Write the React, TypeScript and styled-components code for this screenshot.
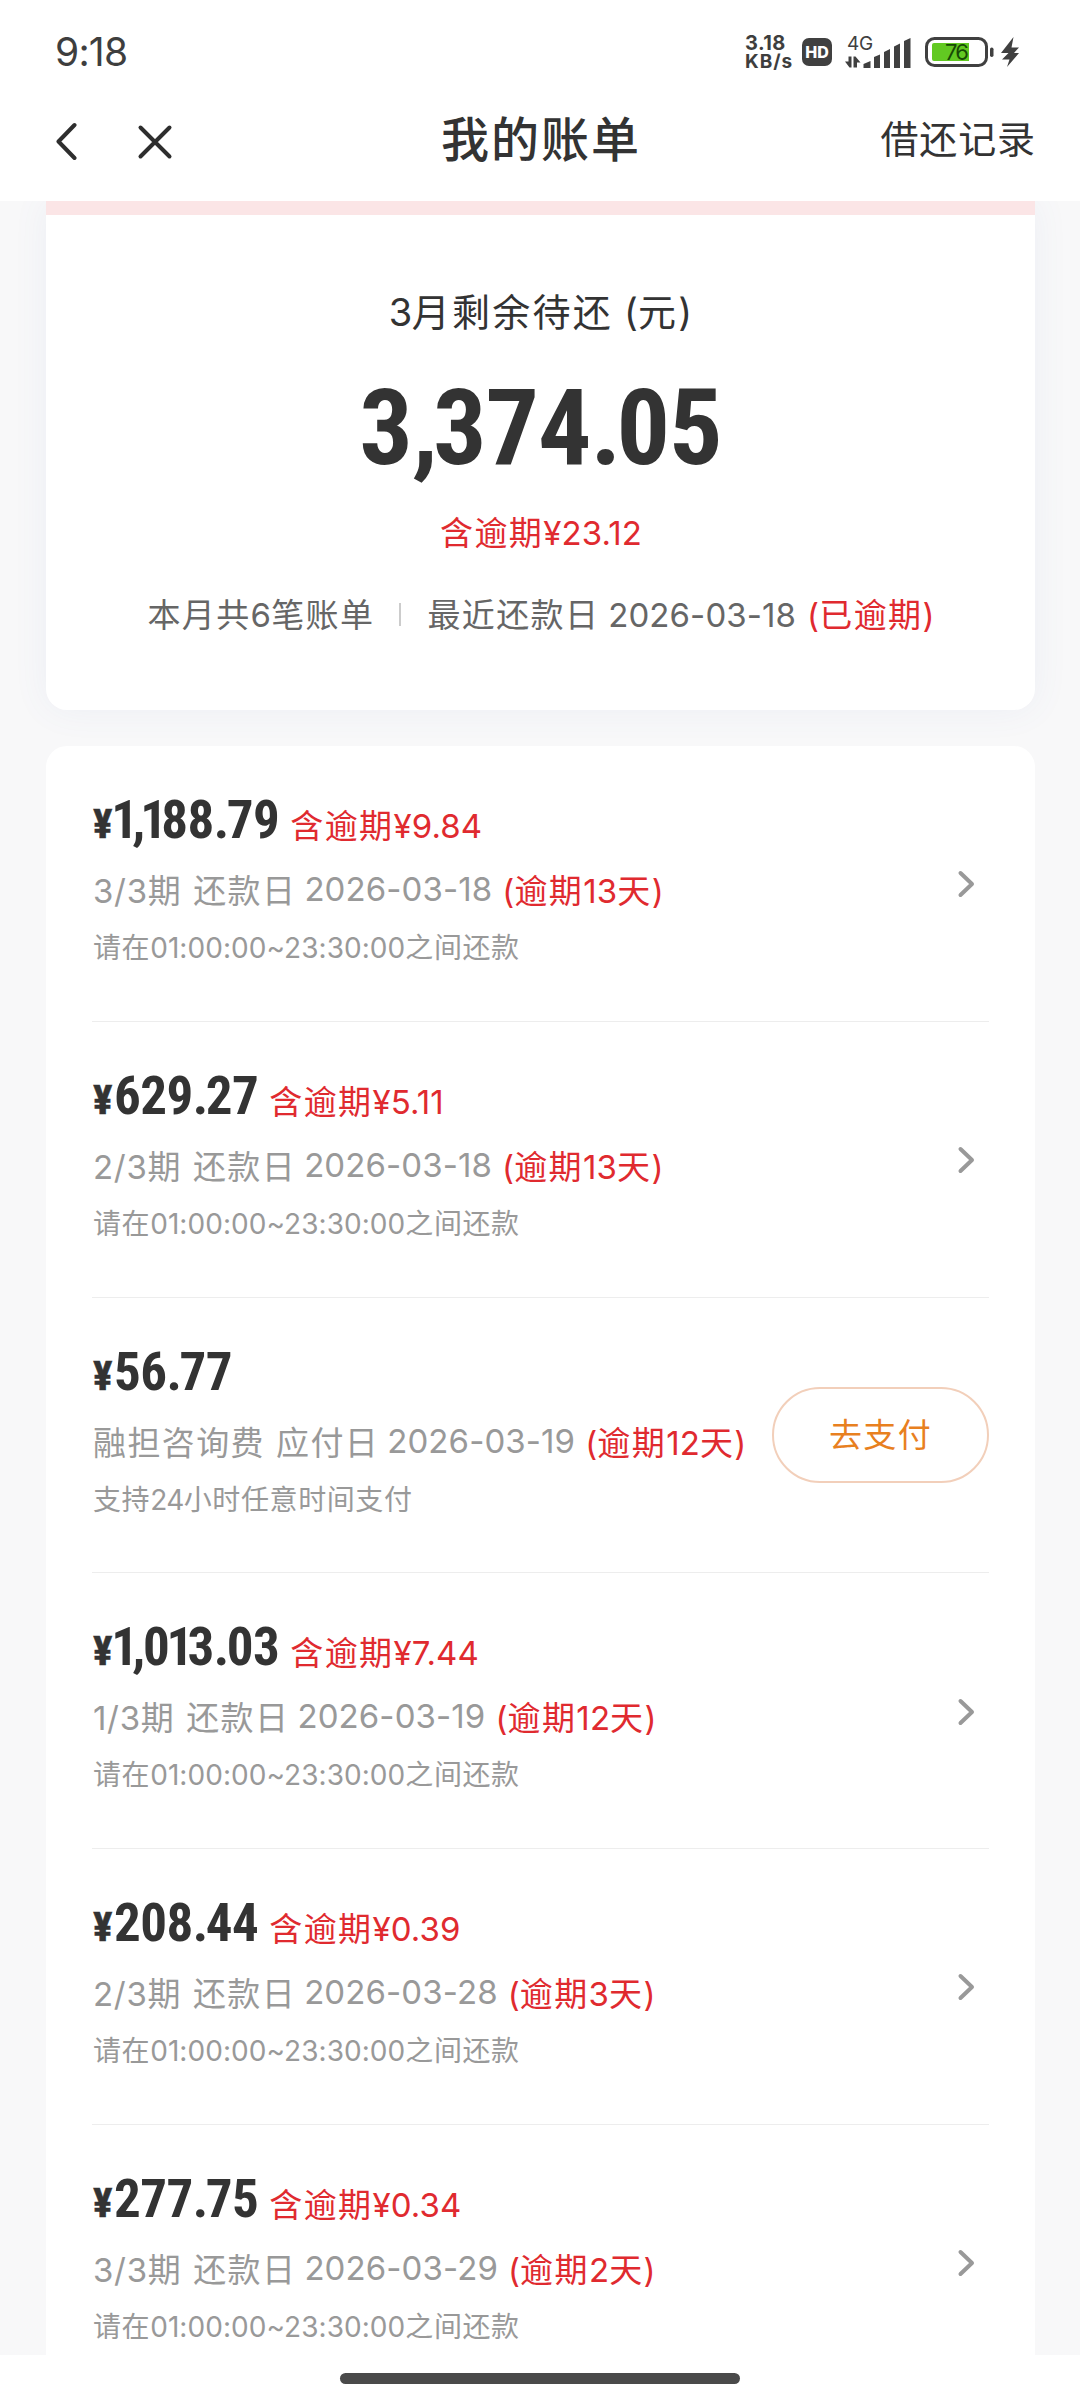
import React from "react";
import styled, { createGlobalStyle } from "styled-components";

const GlobalStyle = createGlobalStyle`
  * { box-sizing: border-box; }
  body { margin: 0; background: #ffffff; }
`;

const latin = `Inter, "Noto Sans CJK SC", sans-serif`;
const cjk = `"Noto Sans CJK SC", sans-serif`;
const figures = `"Roboto Condensed", Roboto, sans-serif`;

const Screen = styled.div`
  width: 1080px;
  height: 2400px;
  display: flex;
  flex-direction: column;
  overflow: hidden;
  background: #ffffff;
  color: #333333;
  font-family: ${cjk};
  white-space: nowrap;
`;

const StatusBar = styled.header`
  height: 104px;
  flex: none;
  display: flex;
  align-items: center;
  justify-content: space-between;
  padding: 0 60px 0 55px;
`;

const Clock = styled.span`
  font-family: ${latin};
  font-size: 39px;
  line-height: 44px;
  letter-spacing: -0.8px;
  color: #3e3e3e;
`;

const StatusIcons = styled.div`
  display: flex;
  align-items: center;
`;

const Speed = styled.div`
  width: 57px;
  display: flex;
  flex-direction: column;
  font-family: ${latin};
  font-weight: 700;
  color: #3e3e3e;
`;

const SpeedValue = styled.span`
  font-size: 20px;
  line-height: 19px;
  letter-spacing: 0.4px;
`;

const SpeedUnit = styled.span`
  font-size: 19px;
  line-height: 18px;
  letter-spacing: 1px;
`;

const HdBadge = styled.div`
  width: 30px;
  height: 28px;
  margin-right: 12px;
  border-radius: 7px;
  background: #404040;
  color: #ffffff;
  font-family: ${latin};
  font-weight: 800;
  font-size: 16px;
  line-height: 28px;
  text-align: center;
`;

const BatterySlot = styled.div`
  display: flex;
  margin: 0 4px 0 8px;
`;

const NavBar = styled.nav`
  height: 97px;
  flex: none;
  display: grid;
  grid-template-columns: 1fr auto 1fr;
  grid-template-rows: 76px;
  align-items: center;
  padding: 0 44px 21px 56px;
`;

const NavActions = styled.div`
  display: flex;
  align-items: center;
  gap: 57px;
`;

const Title = styled.h1`
  margin: 0 10px 12px 0;
  font-size: 48px;
  font-weight: 500;
  line-height: 60px;
  letter-spacing: 2px;
  color: #333333;
`;

const RecordsLink = styled.a`
  justify-self: end;
  margin-bottom: 10px;
  font-size: 38px;
  line-height: 56px;
  letter-spacing: 0.9px;
  color: #333333;
`;

const Content = styled.main`
  height: 2154px;
  flex: none;
  overflow: hidden;
  background: #f8f8f9;
  padding: 0 45px 0 46px;
`;

const Summary = styled.section`
  height: 509px;
  margin-bottom: 36px;
  border-top: 14px solid #fbe5e6;
  border-radius: 0 0 21px 21px;
  background: #ffffff;
  box-shadow: 0 0 36px rgba(80, 120, 190, 0.07);
  display: flex;
  flex-direction: column;
  align-items: center;
`;

const SummaryLabel = styled.div`
  margin-top: 65px;
  font-size: 38px;
  line-height: 60px;
  letter-spacing: 2.3px;
`;

const Total = styled.div`
  margin-top: 28px;
  font-family: ${figures};
  font-weight: 700;
  font-size: 106px;
  line-height: 116px;
  letter-spacing: -0.01em;
`;

const TotalOverdue = styled.div`
  margin: 20px 0 0 1px;
  font-size: 33px;
  line-height: 50px;
  letter-spacing: 1.4px;
  color: #e02a2f;
`;

const SummaryMeta = styled.div`
  margin: 30px 0 0 1px;
  display: flex;
  align-items: center;
  font-size: 33px;
  line-height: 50px;
  letter-spacing: 1.4px;
  color: #666666;
`;

const MetaDivider = styled.i`
  width: 2px;
  height: 23px;
  margin: 0 26px 0 25px;
  background: #cccccc;
`;

const Latin = styled.span<{ $track?: number }>`
  font-family: ${latin};
  letter-spacing: ${(p) => p.$track ?? 0.1}px;
`;

const Overdue = styled.span`
  margin-left: 11px;
  color: #e02a2f;
`;

const BillList = styled.ul`
  margin: 0;
  padding: 0 46px;
  list-style: none;
  border-radius: 21px;
  background: #ffffff;
`;

const BillRow = styled.li`
  height: 275.75px;
  display: flex;
  align-items: center;
  justify-content: space-between;
  border-bottom: 1px solid #ededed;
`;

const BillInfo = styled.div`
  height: 100%;
  padding: 41px 0 0 1px;
  display: flex;
  flex-direction: column;
  align-items: flex-start;
`;

const AmountLine = styled.div`
  height: 66px;
  display: flex;
  align-items: baseline;
`;

const Currency = styled.span`
  width: 21px;
  font-family: ${figures};
  font-weight: 700;
  font-size: 41px;
  line-height: 66px;
  -webkit-text-stroke: 0.6px currentColor;
`;

const Amount = styled.span`
  font-family: ${figures};
  font-weight: 700;
  font-size: 53px;
  line-height: 66px;
  letter-spacing: -0.01em;
`;

const NarrowOne = styled.span`
  margin: 0 -0.1em 0 -0.05em;
`;

const Separator = styled.span`
  letter-spacing: -0.045em;
`;

const Detail = styled.div`
  margin-top: 11px;
  display: flex;
  gap: 8px;
  font-size: 33px;
  line-height: 50px;
  letter-spacing: 1.4px;
  color: #999999;
`;

const DetailSubject = styled.span`
  margin-right: 3px;
`;

const AmountOverdue = styled.span`
  margin-left: 11px;
  font-size: 33px;
  line-height: 50px;
  letter-spacing: 1.4px;
  color: #e02a2f;
`;

const DetailOverdue = styled.span`
  margin-left: 2px;
  color: #e02a2f;
`;

const Hint = styled.div`
  margin-top: 9px;
  font-size: 28px;
  line-height: 42px;
  letter-spacing: 0.6px;
  color: #999999;
`;

const ChevronSlot = styled.div`
  display: flex;
  padding: 2px 14px 0 0;
`;

const PayButton = styled.button`
  width: 217px;
  height: 96px;
  margin-top: 1px;
  padding: 0 0 4px;
  border: 2px solid #f2cfba;
  border-radius: 48px;
  background: #ffffff;
  font-family: ${cjk};
  font-size: 33px;
  line-height: 50px;
  letter-spacing: 1.4px;
  color: #e8801f;
`;

const GestureBar = styled.footer`
  flex: 1;
  display: flex;
  justify-content: center;
  padding-top: 18px;
`;

const GesturePill = styled.div`
  width: 400px;
  height: 11px;
  border-radius: 6px;
  background: #4a4a4a;
`;

const SignalIcon = () => (
  <svg width="72" height="44" viewBox="844 30 72 44" fill="#404040">
    <text x="847" y="50" fontFamily="Inter, sans-serif" fontSize="19" letterSpacing="-0.2">4G</text>
    <path d="M845 61.500h3.500v-5h3v11h-2zM853.500 56.500h2l5 6h-3.500v5h-3.500z" />
    <path d="M863.500 68v-4l7-3v7zM874 68v-11l6-2.500v13.500zM884 68v-16l6-3v19zM894 68v-21.500l6-3v24.500zM904 68v-27l6.500-3v30z" />
  </svg>
);

const BatteryIcon = () => (
  <svg width="72" height="32" viewBox="924 36 72 32">
    <rect x="926.500" y="38.500" width="60" height="27" rx="8" fill="#fff" stroke="#404040" strokeWidth="3" />
    <path d="M934 43h35v18h-35a2 2 0 0 1-2-2v-14a2 2 0 0 1 2-2z" fill="#62c922" />
    <rect x="990" y="47.500" width="3.500" height="9.500" rx="1.700" fill="#404040" />
    <text x="956" y="60" textAnchor="middle" fontFamily="Inter, sans-serif" fontSize="22" letterSpacing="-1.800" fill="#174a05">76</text>
  </svg>
);

const BoltIcon = () => (
  <svg width="20" height="32" viewBox="1000 36 20 32" fill="#404040">
    <path d="M1013.500 37l-12.500 16h7.500l-6.500 6.500h7.500l-2.500 7.500 12-14h-5l5-5.500h-7.500z" />
  </svg>
);

const BackIcon = () => (
  <svg width="24" height="42" viewBox="55 121 24 42" fill="none" stroke="#2e2e2e" strokeWidth="4" strokeLinecap="round" strokeLinejoin="round">
    <path d="M73.500 125L57.500 141.500L73.500 158" />
  </svg>
);

const CloseIcon = () => (
  <svg width="36" height="36" viewBox="132 123 36 36" fill="none" stroke="#2e2e2e" strokeWidth="4" strokeLinecap="round">
    <path d="M135.500 126.500L164.500 155.500M164.500 126.500L135.500 155.500" />
  </svg>
);

const ChevronIcon = () => (
  <svg width="18" height="30" viewBox="0 0 18 30" fill="none" stroke="#999" strokeWidth="4" strokeLinecap="round" strokeLinejoin="round">
    <path d="M3.500 4L15 15L3.500 26" />
  </svg>
);

const Figures = ({ value }: { value: string }) => (
  <>
    {value.split(/([1.,])/).map((part, i) => {
      if (part === "1") return <NarrowOne key={i}>1</NarrowOne>;
      if (part === "." || part === ",") return <Separator key={i}>{part}</Separator>;
      return part;
    })}
  </>
);

type Bill = {
  amount: string;
  overdue?: string;
  term?: string;
  label: string;
  date: string;
  days: string;
  payable?: boolean;
};

const bills: Bill[] = [
  { amount: "1,188.79", overdue: "9.84", term: "3/3", label: "还款日", date: "2026-03-18", days: "13" },
  { amount: "629.27", overdue: "5.11", term: "2/3", label: "还款日", date: "2026-03-18", days: "13" },
  { amount: "56.77", label: "应付日", date: "2026-03-19", days: "12", payable: true },
  { amount: "1,013.03", overdue: "7.44", term: "1/3", label: "还款日", date: "2026-03-19", days: "12" },
  { amount: "208.44", overdue: "0.39", term: "2/3", label: "还款日", date: "2026-03-28", days: "3" },
  { amount: "277.75", overdue: "0.34", term: "3/3", label: "还款日", date: "2026-03-29", days: "2" },
];

const BillItem = ({ bill }: { bill: Bill }) => (
  <BillRow>
    <BillInfo>
      <AmountLine>
        <Currency>¥</Currency>
        <Amount><Figures value={bill.amount} /></Amount>
        {bill.overdue && (
          <AmountOverdue>
            含逾期<Latin>¥{bill.overdue}</Latin>
          </AmountOverdue>
        )}
      </AmountLine>
      <Detail>
        <DetailSubject>
          {bill.term ? <><Latin $track={0.7}>{bill.term}</Latin>期</> : "融担咨询费"}
        </DetailSubject>
        <span>{bill.label}</span>
        <Latin>{bill.date}</Latin>
        <DetailOverdue>
          <Latin>(</Latin>逾期<Latin>{bill.days}</Latin>天<Latin>)</Latin>
        </DetailOverdue>
      </Detail>
      <Hint>
        {bill.payable ? (
          <>支持<Latin $track={-0.6}>24</Latin>小时任意时间支付</>
        ) : (
          <>请在<Latin $track={0.05}>01:00:00~23:30:00</Latin>之间还款</>
        )}
      </Hint>
    </BillInfo>
    {bill.payable ? <PayButton>去支付</PayButton> : <ChevronSlot><ChevronIcon /></ChevronSlot>}
  </BillRow>
);

export default function App() {
  return (
    <Screen>
      <GlobalStyle />
      <StatusBar>
        <Clock>9:18</Clock>
        <StatusIcons>
          <Speed>
            <SpeedValue>3.18</SpeedValue>
            <SpeedUnit>KB/s</SpeedUnit>
          </Speed>
          <HdBadge>HD</HdBadge>
          <SignalIcon />
          <BatterySlot>
            <BatteryIcon />
          </BatterySlot>
          <BoltIcon />
        </StatusIcons>
      </StatusBar>
      <NavBar>
        <NavActions>
          <BackIcon />
          <CloseIcon />
        </NavActions>
        <Title>我的账单</Title>
        <RecordsLink>借还记录</RecordsLink>
      </NavBar>
      <Content>
        <Summary>
          <SummaryLabel>
            <Latin $track={-0.6}>3</Latin>月剩余待还 <Latin>(</Latin>元<Latin>)</Latin>
          </SummaryLabel>
          <Total><Figures value="3,374.05" /></Total>
          <TotalOverdue>
            含逾期<Latin>¥23.12</Latin>
          </TotalOverdue>
          <SummaryMeta>
            <span>本月共<Latin>6</Latin>笔账单</span>
            <MetaDivider />
            <span>最近还款日 <Latin>2026-03-18</Latin></span>
            <Overdue><Latin>(</Latin>已逾期<Latin>)</Latin></Overdue>
          </SummaryMeta>
        </Summary>
        <BillList>
          {bills.map((bill) => (
            <BillItem key={bill.amount} bill={bill} />
          ))}
        </BillList>
      </Content>
      <GestureBar>
        <GesturePill />
      </GestureBar>
    </Screen>
  );
}
